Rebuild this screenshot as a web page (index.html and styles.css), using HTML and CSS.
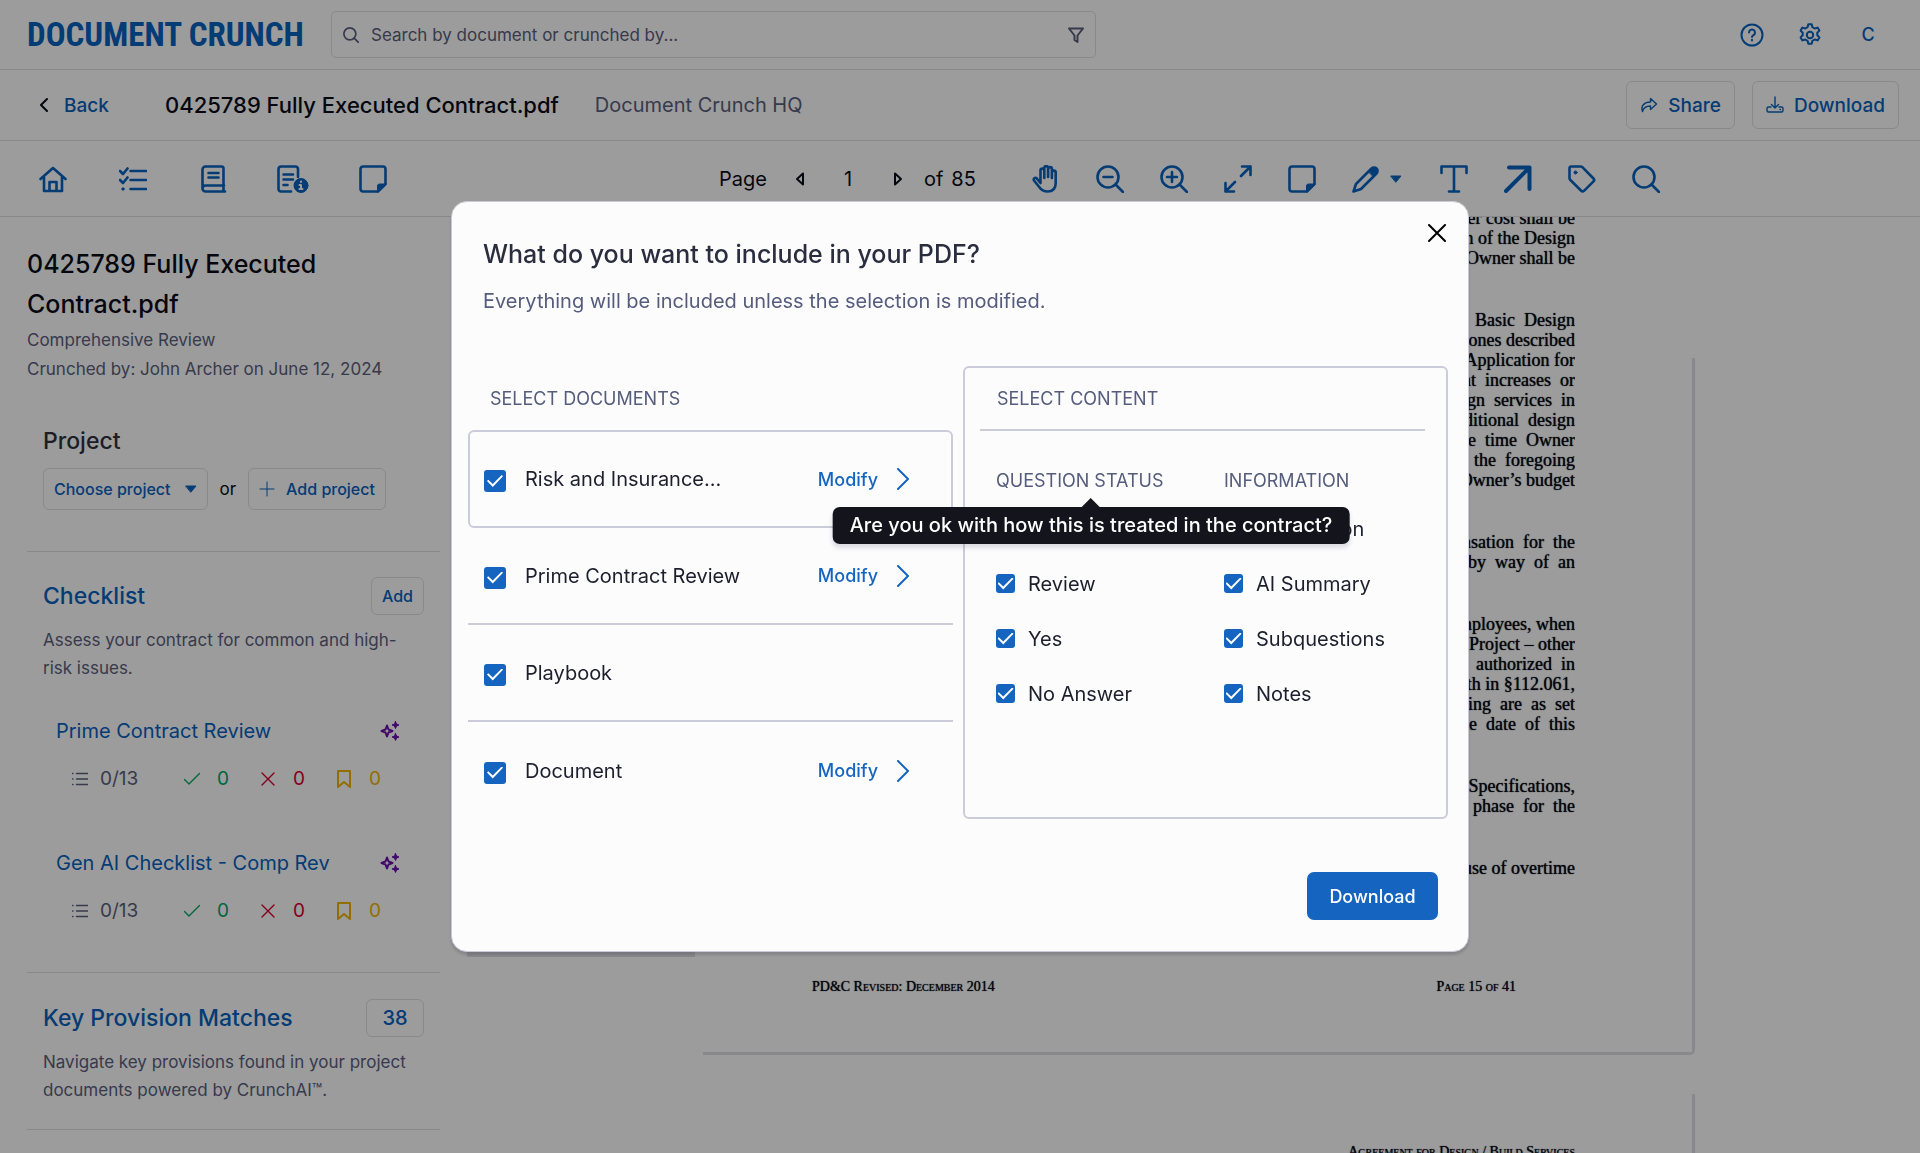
FILE: index.html
```html
<!DOCTYPE html>
<html lang="en">
<head>
<meta charset="utf-8">
<meta name="viewport" content="width=device-width, initial-scale=1">
<title>Document Crunch</title>
<link rel="stylesheet" href="styles.css">
</head>
<body>
<svg class="sprite" aria-hidden="true">
  <symbol id="search" viewBox="0 0 28 28"><circle cx="12" cy="12" r="10.500"/><path d="M19.500 19.500 27 27"/></symbol>
  <symbol id="note" viewBox="0 0 28 28"><path d="M4 1.500h20a2.500 2.500 0 0 1 2.500 2.500v15l-7.500 7.500H4A2.500 2.500 0 0 1 1.500 24V4A2.500 2.500 0 0 1 4 1.500z"/><path class="solid" d="M18.500 27v-6a2 2 0 0 1 2-2H27z"/></symbol>
  <symbol id="caret" viewBox="0 0 12 8"><path class="solid" d="M1 1h10L6 7z"/></symbol>
  <symbol id="sparkle" viewBox="0 0 20 20"><path d="M7 4.500 8.500 8.500 12.500 10 8.500 11.500 7 15.500 5.500 11.500 1.500 10 5.500 8.500z"/><path class="solid" d="M15.500.5l1 2.500 2.500 1-2.500 1-1 2.500-1-2.500-2.500-1 2.500-1zM15.500 12.500l1 2.500 2.500 1-2.500 1-1 2.500-1-2.500-2.500-1 2.500-1z"/></symbol>
  <symbol id="list" viewBox="0 0 16 16"><path d="M4.500 2.500H16M4.500 8H16M4.500 13.500H16M.5 2.500H1M.5 8H1M.5 13.500H1"/></symbol>
  <symbol id="check" viewBox="0 0 16 16"><path d="M.5 8.500 5 13 15.500 2.500"/></symbol>
  <symbol id="cross" viewBox="0 0 16 16"><path d="M2 2l12 12M14 2 2 14"/></symbol>
  <symbol id="bookmark" viewBox="0 0 16 18"><path d="M2 1h12v16l-6-5-6 5z"/></symbol>
  <symbol id="chevron" viewBox="0 0 14 22"><path d="M2 1l10 10L2 21"/></symbol>
</svg>

<div class="app">
  <header class="topbar">
    <a class="logo" href="#">DOCUMENT CRUNCH</a>
    <div class="search">
      <svg class="i16 lens"><use href="#search"/></svg>
      <input type="text" aria-label="Search" placeholder="Search by document or crunched by...">
      <button class="plain" aria-label="Filter"><svg class="i16" viewBox="0 0 16 16"><path d="M1 1.500h14L9.500 8.500V15l-3-2V8.500z"/></svg></button>
    </div>
    <nav class="account">
      <button class="plain" aria-label="Help"><svg class="i24" viewBox="0 0 24 24"><circle cx="12" cy="12" r="10.500"/><path d="M9 9.500a3 3 0 1 1 4.500 2.600c-1 .6-1.500 1-1.500 2"/><path d="M12 16.800v.7"/></svg></button>
      <button class="plain" aria-label="Settings"><svg class="i24" viewBox="0 0 24 24"><circle cx="12" cy="12" r="3.200"/><path d="M10.300 1.200h3.400l.7 3 2.300 1.300 2.900-.9 1.800 3-2.100 2.200v2.400l2.100 2.200-1.800 3-2.900-.9-2.300 1.300-.7 3h-3.400l-.7-3-2.300-1.300-2.900.9-1.800-3 2.100-2.200V9.800L2.600 7.600l1.800-3 2.900.9 2.300-1.300z"/></svg></button>
      <button class="plain user">C</button>
    </nav>
  </header>

  <div class="filebar">
    <a class="back" href="#"><svg viewBox="0 0 9 14"><path d="M8 1 2 7l6 6"/></svg>Back</a>
    <h1>0425789 Fully Executed Contract.pdf</h1>
    <span class="org">Document Crunch HQ</span>
    <div class="actions">
      <button class="btn"><svg class="i18" viewBox="0 0 18 18"><path d="M10.500 2.500 16.500 8l-6 5.500v-3.500C6 10 3.500 11.500 2.500 15.500 .5 10 4 6 10.500 6z"/></svg>Share</button>
      <button class="btn"><svg class="i18" viewBox="0 0 18 18"><path d="M9 1v11M5.500 8.500 9 12l3.500-3.500M5 11H2.500A1.500 1.500 0 0 0 1 12.500v2A1.500 1.500 0 0 0 2.500 16h13a1.500 1.500 0 0 0 1.500-1.500v-2a1.500 1.500 0 0 0-1.500-1.500H13M14 13.500h.5"/></svg>Download</button>
    </div>
  </div>

  <div class="toolbar">
    <nav class="tabs">
      <button class="plain" aria-label="Home"><svg class="i28" viewBox="0 0 28 28"><path d="M1.500 14 14 3l12.500 11M5 12v14h18V12M10.500 26v-9h7v9"/></svg></button>
      <button class="plain" aria-label="Checklist"><svg class="i28" viewBox="0 0 28 28"><path d="M1 6l3 3 4.500-5.500M1 15l3 3 4.500-5.500M11.500 6H27M11.500 15H27M11.500 24H27"/><circle class="solid" cx="4" cy="24" r="1.200"/></svg></button>
      <button class="plain" aria-label="Playbook"><svg class="i28" viewBox="0 0 28 28"><path d="M25 20.500H6.500A3 3 0 0 0 6.500 26.500H26M24.500 20.500v6M3.500 23.500V4.500A3 3 0 0 1 6.500 1.500H22.500a2 2 0 0 1 2 2v17M9.500 8h10M9.500 12.500h10"/></svg></button>
      <button class="plain" aria-label="Document information"><svg class="i28 wide" viewBox="0 0 32 28"><path d="M14 26.500H4A2.500 2.500 0 0 1 1.500 24V4A2.500 2.500 0 0 1 4 1.500h14.500A2.500 2.500 0 0 1 21 4v8M6.500 9.500h9.500M6.500 14.500h9.500M6.500 20h4"/><circle class="solid" cx="24" cy="20.500" r="7"/><path class="light" d="M24 16.500v.6M22.500 20H24v4M22.500 24h3"/></svg></button>
      <button class="plain" aria-label="Notes"><svg class="i28"><use href="#note"/></svg></button>
    </nav>
    <div class="pager">
      <span>Page</span>
      <button class="plain dark" aria-label="Previous page"><svg viewBox="0 0 9 14"><path d="M8 1.500v11L2 7z"/></svg></button>
      <span class="num">1</span>
      <button class="plain dark" aria-label="Next page"><svg viewBox="0 0 9 14"><path d="M1 1.500v11L7 7z"/></svg></button>
      <span class="total"><span>of</span><span>85</span></span>
    </div>
    <div class="tools">
      <button class="plain" aria-label="Pan"><svg class="i28" viewBox="0 0 28 28"><path d="M8.500 14V5.500a1.900 1.900 0 0 1 3.800 0V13M12.300 12V3a1.900 1.900 0 0 1 3.800 0v9M16.100 12V4a1.900 1.900 0 0 1 3.800 0v9M19.900 13V7.500a1.900 1.900 0 0 1 3.800 0V18c0 5.500-3 8.500-8 8.500-4.500 0-6.500-1.500-8.500-4.500L2 15.500c-1.200-2 1.500-3.500 3-1.800L8.500 18v-4"/></svg></button>
      <button class="plain" aria-label="Zoom out"><svg class="i28" viewBox="0 0 28 28"><circle cx="12" cy="12" r="10.500"/><path d="M19.500 19.500 27 27M7.500 12h9"/></svg></button>
      <button class="plain" aria-label="Zoom in"><svg class="i28" viewBox="0 0 28 28"><circle cx="12" cy="12" r="10.500"/><path d="M19.500 19.500 27 27M7 12h10M12 7v10"/></svg></button>
      <button class="plain" aria-label="Fit page"><svg class="i28" viewBox="0 0 28 28"><path d="M17 11 26.500 1.500M18 1.500h8.500V10M11 17 1.500 26.500M1.500 18v8.500H10"/></svg></button>
      <button class="plain" aria-label="Add note"><svg class="i28"><use href="#note"/></svg></button>
      <button class="plain pen" aria-label="Draw"><svg class="i28" viewBox="0 0 28 28"><path d="M1.500 26.500 4 19 19.500 3.500a3.500 3.500 0 0 1 5 5L9 24z"/><path class="solid" d="M16.500 6.500l3-3a3.500 3.500 0 0 1 5 5l-3 3z"/></svg><svg class="caret"><use href="#caret"/></svg></button>
      <button class="plain" aria-label="Add text"><svg class="i28" viewBox="0 0 28 28"><path d="M1.500 8V1.500h25V8M14 1.500v25M9 26.500h10"/></svg></button>
      <button class="plain" aria-label="Draw arrow"><svg class="i28 heavy" viewBox="0 0 28 28"><path d="M2 26 25.500 2.500M5 2.500h20.500V24"/></svg></button>
      <button class="plain" aria-label="Tag"><svg class="i28" viewBox="0 0 28 28"><path d="M1.500 3A1.500 1.500 0 0 1 3 1.500h9.500a3 3 0 0 1 2.100.9L25.500 13.500a2 2 0 0 1 0 2.800L16 25.800a2 2 0 0 1-2.800 0L2.400 15a3 3 0 0 1-.9-2.100z"/><circle class="solid" cx="7.500" cy="7.500" r="1.500"/></svg></button>
      <button class="plain" aria-label="Search in document"><svg class="i28"><use href="#search"/></svg></button>
    </div>
  </div>

  <div class="workspace">
    <aside class="sidebar">
      <section class="summary">
        <h2>0425789 Fully Executed Contract.pdf</h2>
        <p>Comprehensive Review</p>
        <p>Crunched by: John Archer on June 12, 2024</p>
      </section>
      <section class="block project">
        <h3 class="ink">Project</h3>
        <div class="choices">
          <button class="btn small">Choose project<svg class="caret"><use href="#caret"/></svg></button>
          <span>or</span>
          <button class="btn small add"><svg class="i16" viewBox="0 0 16 16"><path d="M8 1v14M1 8h14"/></svg>Add project</button>
        </div>
      </section>
      <section class="block checklist">
        <div class="head"><h3>Checklist</h3><button class="btn tiny">Add</button></div>
        <p>Assess your contract for common and high-risk issues.</p>
        <article>
          <div class="head"><a href="#">Prime Contract Review</a><svg class="spark"><use href="#sparkle"/></svg></div>
          <ul class="stats">
            <li class="grey"><svg><use href="#list"/></svg>0/13</li>
            <li class="green"><svg><use href="#check"/></svg>0</li>
            <li class="red"><svg><use href="#cross"/></svg>0</li>
            <li class="amber"><svg><use href="#bookmark"/></svg>0</li>
          </ul>
        </article>
        <article>
          <div class="head"><a href="#">Gen AI Checklist - Comp Rev</a><svg class="spark"><use href="#sparkle"/></svg></div>
          <ul class="stats">
            <li class="grey"><svg><use href="#list"/></svg>0/13</li>
            <li class="green"><svg><use href="#check"/></svg>0</li>
            <li class="red"><svg><use href="#cross"/></svg>0</li>
            <li class="amber"><svg><use href="#bookmark"/></svg>0</li>
          </ul>
        </article>
      </section>
      <section class="block provisions">
        <div class="head"><h3>Key Provision Matches</h3><button class="btn tiny count">38</button></div>
        <p>Navigate key provisions found in your project documents powered by CrunchAI™.</p>
      </section>
    </aside>

    <main class="viewer">
      <div class="thumbs"></div>
      <div class="pages">
        <div class="page">
          <div class="lines">
            <p>other cost shall be
upon of the Design
Owner shall be</p>
            <p>all  Basic  Design
milestones described
Application for
that  increases  or
design  services  in
additional  design
the  time  Owner
of  the  foregoing
Owner’s budget</p>
            <p>compensation  for  the
by  way  of  an</p>
            <p>employees, when
Project – other
as  authorized  in
forth in §112.061,
lodging  are  as  set
the  date  of  this</p>
            <p>Specifications,
design  phase  for  the</p>
            <p>use of overtime</p>
          </div>
          <div class="foot"><span>PD&amp;C Revised: December 2014</span><span>Page 15 of 41</span></div>
        </div>
        <div class="page next"><div class="running">Agreement for Design / Build Services</div></div>
      </div>
    </main>
  </div>
</div>

<div class="overlay">
  <div class="modal" role="dialog" aria-modal="true" aria-labelledby="dlg-title">
    <button class="plain close" aria-label="Close"><svg viewBox="0 0 18 18"><path d="M1 1l16 16M17 1 1 17"/></svg></button>
    <h2 id="dlg-title">What do you want to include in your PDF?</h2>
    <p class="lead">Everything will be included unless the selection is modified.</p>
    <div class="columns">
      <section class="docs">
        <h3>SELECT DOCUMENTS</h3>
        <ul>
          <li class="active"><label><input type="checkbox" checked>Risk and Insurance...</label><button class="plain modify">Modify<svg><use href="#chevron"/></svg></button></li>
          <li><label><input type="checkbox" checked>Prime Contract Review</label><button class="plain modify">Modify<svg><use href="#chevron"/></svg></button></li>
          <li><label><input type="checkbox" checked>Playbook</label></li>
          <li><label><input type="checkbox" checked>Document</label><button class="plain modify">Modify<svg><use href="#chevron"/></svg></button></li>
        </ul>
      </section>
      <section class="content">
        <h3>SELECT CONTENT</h3>
        <div class="options">
          <fieldset>
            <legend>QUESTION STATUS</legend>
            <label><input type="checkbox" checked>No</label>
            <label><input type="checkbox" checked>Review</label>
            <label><input type="checkbox" checked>Yes</label>
            <label><input type="checkbox" checked>No Answer</label>
            <div class="tooltip" role="tooltip">Are you ok with how this is treated in the contract?</div>
          </fieldset>
          <fieldset>
            <legend>INFORMATION</legend>
            <label><input type="checkbox" checked>Description</label>
            <label><input type="checkbox" checked>AI Summary</label>
            <label><input type="checkbox" checked>Subquestions</label>
            <label><input type="checkbox" checked>Notes</label>
          </fieldset>
        </div>
      </section>
    </div>
    <div class="footer"><button class="primary">Download</button></div>
  </div>
</div>
</body>
</html>
```
FILE: styles.css
```css
:root {
  --blue: #0862c0;
  --ink: #0a0c18;
  --muted: #5b607e;
  --line: #e0e0e4;
}
* { box-sizing: border-box; }
body { margin: 0; height: 100vh; overflow: hidden; font-family: Inter, "Liberation Sans", sans-serif; color: var(--ink); background: #fff; }
h1, h2, h3, p, ul, fieldset { margin: 0; padding: 0; border: 0; }
h1, h2, h3 { font-weight: 500; }
ul { list-style: none; }
a { color: var(--blue); text-decoration: none; }
button, input { font: inherit; color: inherit; }
svg { fill: none; stroke: currentColor; stroke-width: 2; stroke-linecap: round; stroke-linejoin: round; flex: none; }
.sprite { display: none; }
.solid { fill: currentColor; stroke-width: 1; }
.light { stroke: #fff; stroke-width: 2; }
.plain { display: flex; align-items: center; justify-content: center; padding: 0; border: 0; background: none; color: var(--blue); }
.dark { color: var(--ink); }
.i16 { width: 16px; height: 16px; }
.i18 { width: 18px; height: 18px; stroke-width: 1.4; }
.i24 { width: 24px; height: 24px; }
.i28 { width: 28px; height: 28px; stroke-width: 2.6; }
.wide { width: 32px; }
.heavy { stroke-width: 4; }
.caret { width: 12px; height: 8px; }

.app { display: flex; flex-direction: column; height: 100vh; }
.topbar { display: flex; align-items: center; height: 70px; padding: 0 27px; border-bottom: 1px solid var(--line); }
.logo { width: 304px; font: bold 33px "Roboto Condensed", "Noto Sans Condensed", "Open Sans Condensed", "Liberation Sans Narrow", Roboto, sans-serif; white-space: nowrap; }
.search { display: flex; align-items: center; gap: 12px; width: 765px; height: 47px; padding: 0 11px; border: 1px solid var(--line); border-radius: 5px; color: var(--muted); }
.search input { flex: 1; min-width: 0; border: 0; padding: 0; background: none; font-size: 17px; outline: 0; }
.search input::placeholder { color: var(--muted); opacity: 1; }
.search .lens { stroke-width: 3; }
.search button { color: var(--muted); }
.account { display: flex; margin-left: auto; gap: 34px; padding-right: 13px; }
.account .user { width: 24px; font-size: 18px; font-weight: 500; }

.filebar { display: flex; align-items: center; height: 71px; padding: 0 21px 0 39px; border-bottom: 1px solid var(--line); }
.back { display: flex; align-items: center; gap: 16px; width: 126px; font-size: 19px; font-weight: 500; }
.back svg { width: 9px; height: 14px; color: var(--ink); }
.filebar h1 { font-size: 22px; margin-right: 36px; }
.org { font-size: 20px; color: var(--muted); }
.actions { display: flex; gap: 17px; margin-left: auto; }
.btn { display: flex; align-items: center; justify-content: center; gap: 10px; height: 48px; padding: 0 13px; border: 1px solid var(--line); border-radius: 6px; background: none; color: var(--blue); font-size: 19px; font-weight: 500; }
.small { height: 42px; padding: 0 10px; font-size: 16px; gap: 14px; }
.small.add { gap: 11px; }
.small .i16 { stroke-width: 1; }
.tiny { height: 38px; font-size: 16px; padding: 0 10px; }
.count { width: 58px; font-size: 20px; }

.toolbar { display: flex; align-items: center; height: 76px; border-bottom: 1px solid var(--line); }
.tabs { display: flex; gap: 52px; padding-left: 39px; width: 719px; }
.tabs .plain { width: 28px; }
.pager { display: flex; align-items: center; width: 313px; font-size: 20px; }
.pager svg { width: 9px; height: 14px; }
.pager .plain { margin-left: 28px; }
.pager .num { width: 10px; margin: 0 12px 0 40px; }
.pager .total { display: flex; gap: 8px; margin-left: 21px; }
.tools { display: flex; gap: 36px; }
.pen { gap: 10px; margin-right: 2px; }

.workspace { display: flex; flex: 1; min-height: 0; }
.sidebar { width: 451px; flex: none; padding: 27px 11px 0 27px; overflow: hidden; }
.sidebar p { font-size: 17px; line-height: 28px; color: var(--muted); }
.sidebar h3 { font-size: 23px; line-height: 38px; color: var(--blue); }
.sidebar h3.ink { color: #30323e; }
.summary h2 { margin-bottom: 2px; font-size: 25px; line-height: 40px; padding-right: 80px; }
.summary p { line-height: 29px; }
.block { padding: 0 16px; border-bottom: 1px solid var(--line); }
.head { display: flex; align-items: center; justify-content: space-between; }
.project { padding-top: 38px; padding-bottom: 41px; }
.choices { display: flex; align-items: center; gap: 12px; margin-top: 8px; font-size: 17px; }
.checklist { padding-top: 25px; padding-bottom: 26px; }
.block .head + p { padding-top: 11px; }
article { padding: 29px 24px 0 13px; height: 132px; }
article a { font-size: 20px; line-height: 40px; }
.spark { width: 20px; height: 20px; color: #6a0dad; }
.stats { display: flex; padding: 14px 0 0 16px; font-size: 19px; line-height: 28px; }
.stats li { display: flex; flex: none; align-items: center; gap: 17px; width: 76px; }
.stats svg { width: 16px; height: 18px; stroke-width: 1.4; }
.stats .grey { width: 112px; gap: 12px; color: var(--muted); }
.stats .amber { width: 50px; }
.green { color: #00a868; }
.red { color: #d80032; }
.amber { color: #f0b400; }
.stats .amber svg { stroke-width: 2; }
.provisions { padding-top: 26px; padding-bottom: 25px; }

.viewer { display: flex; flex: 1; min-width: 0; overflow: hidden; padding-left: 16px; }
.thumbs { width: 228px; height: 740px; border-bottom: 6px solid var(--line); }
.pages { width: 1000px; padding-left: 8px; }
.page { display: flex; flex-direction: column; height: 838px; padding: 0 120px 0 109px; border-bottom: 3px solid var(--line); border-radius: 0 0 5px 0; background: linear-gradient(var(--line), var(--line)) right bottom / 3px 694px no-repeat; }
.lines { display: flex; flex-direction: column; justify-content: flex-end; gap: 42px; height: 752px; flex: none; overflow: hidden; padding-bottom: 91px; font: 18px/20px "Liberation Serif", serif; text-align: right; text-shadow: 0 0 1px currentColor; }
.lines p { white-space: pre; }
.foot, .running { font: 14px/22px "Liberation Serif", serif; font-variant: small-caps; text-shadow: 0 0 1px currentColor; }
.foot { display: flex; justify-content: space-between; padding: 7px 59px 0 0; }
.next { margin-top: 39px; height: 200px; padding-top: 47px; }
.running { text-align: right; }

.overlay { position: fixed; inset: 0; display: grid; place-items: center; background: rgba(0, 0, 0, 0.39); }
.modal { position: relative; width: 1018px; padding: 32px 20px 31px 16px; border: 1px solid #c9c9d8; border-radius: 16px; background: #fcfcfd; box-shadow: 0 3px 3px rgba(40, 40, 60, 0.2); }
.close { position: absolute; top: 22px; right: 22px; color: #000; }
.close svg { width: 18px; height: 18px; }
.modal h2 { padding-left: 15px; font-size: 25px; line-height: 40px; color: #2a2d3e; }
.lead { padding-left: 15px; margin-top: 13px; font-size: 20px; line-height: 28px; color: #555c7c; }
.columns { display: grid; grid-template-columns: 1fr 1fr; gap: 10px; margin-top: 51px; }
.columns h3, legend { font-size: 18px; line-height: 24px; font-weight: 400; color: #555c7c; padding: 0; }
.docs h3 { padding: 21px 0 19px 22px; }
.docs li { display: flex; align-items: center; justify-content: space-between; height: 97px; padding: 0 43px 0 16px; border-bottom: 2px solid #cbccda; }
.docs li:last-child { border-bottom: 0; }
.docs .active { height: 98px; border: 2px solid #cbccda; border-radius: 6px; padding: 0 41px 0 14px; }
.modal label { display: flex; align-items: center; color: #1d1f2d; }
.docs label { gap: 19px; font-size: 20px; }
.modify { gap: 18px; font-size: 18px; font-weight: 500; color: #1565c0; }
.modify svg { width: 14px; height: 22px; }
input[type="checkbox"] { appearance: none; flex: none; display: grid; width: 22px; height: 22px; margin: 0; border-radius: 3px; background: #1565c0; }
.docs input[type="checkbox"] { margin-top: 4px; }
input[type="checkbox"]::before { content: ""; place-self: center; width: 16px; height: 12px; background: #fff; clip-path: polygon(0 50%, 8% 40%, 36% 76%, 92% 0, 100% 10%, 36% 100%); }
.content { border: 2px solid #cbccda; border-radius: 6px; padding: 19px 21px 0 15px; height: 453px; }
.content h3 { padding: 0 0 18px 17px; border-bottom: 2px solid #cbccda; }
.options { display: grid; grid-template-columns: 228px 1fr; padding: 38px 0 0 16px; }
.options fieldset { position: relative; min-width: 0; }
.options legend { margin-bottom: 8px; }
.options label { height: 55px; gap: 13px; font-size: 20px; }
.options input[type="checkbox"] { width: 19px; height: 19px; }
.tooltip { position: absolute; top: 6px; left: 95px; transform: translateX(-50%); padding: 0 17px; border-radius: 7px; background: #14151c; color: #fff; font-size: 20px; line-height: 37px; font-weight: 500; white-space: nowrap; z-index: 2; box-shadow: 0 4px 4px rgba(40, 40, 80, 0.15); }
.tooltip::before { content: ""; position: absolute; top: -9px; left: 50%; margin-left: -10px; border: 10px solid transparent; border-top: 0; border-bottom-color: #14151c; }
.footer { display: flex; justify-content: flex-end; padding: 53px 10px 0 0; }
.primary { height: 48px; width: 131px; border: 0; border-radius: 7px; background: #1565c0; color: #fff; font-size: 18px; font-weight: 500; }
```
